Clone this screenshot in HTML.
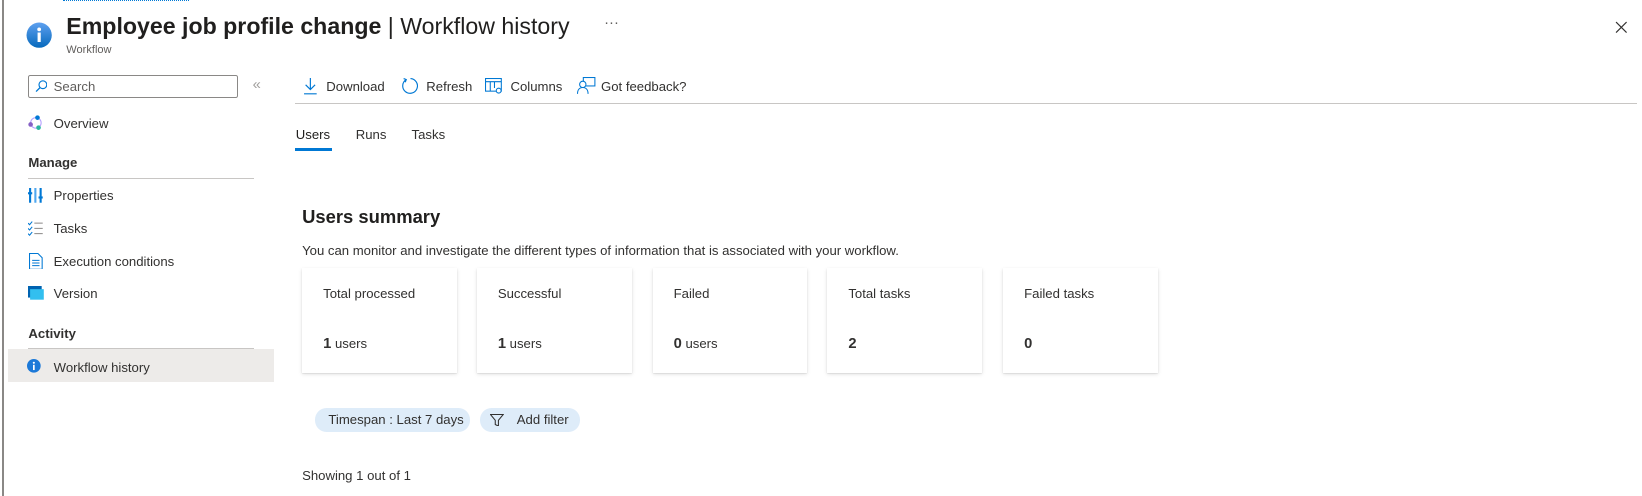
<!DOCTYPE html>
<html><head><meta charset="utf-8"><style>
html,body{margin:0;padding:0;background:#fff;overflow:hidden}
body{width:1642px;height:496px}
#w{position:relative;width:1560px;height:471px;zoom:1.05256;font-family:"Liberation Sans",sans-serif;color:#323130;font-size:12.5px}
.a{position:absolute;white-space:nowrap}
.nav{position:absolute;left:51px;font-size:12.5px}
.ic{position:absolute}
.card{position:absolute;top:255px;width:147px;height:99px;background:#fff;box-shadow:0 1.6px 3.6px rgba(0,0,0,.13),0 0.3px 0.9px rgba(0,0,0,.11)}
.card .l{position:absolute;left:20px;top:17px;font-size:12.5px}
.card .v{position:absolute;left:20px;top:64px;font-size:12.5px}
.card .v b{font-size:14px}
.pill{position:absolute;top:388px;height:22px;background:#deecf9;border-radius:11px;font-size:12.5px;line-height:22px}
</style></head><body><div id="w">
<div class="a" style="left:2px;top:0;width:2px;height:471px;background:#8a8886"></div>
<div class="a" style="left:60px;top:0;width:120px;height:2px;border-top:1px dotted #0078d4"></div>
<svg class="ic" style="left:25px;top:21px" width="25" height="25" viewBox="0 0 25 25"><defs><linearGradient id="g" x1="0" y1="0" x2="0" y2="1"><stop offset="0" stop-color="#5ea0ef"/><stop offset="1" stop-color="#0669bc"/></linearGradient></defs><circle cx="12.5" cy="12.5" r="12" fill="url(#g)"/><circle cx="12.5" cy="7" r="1.8" fill="#fff"/><rect x="11" y="10" width="3" height="9" fill="#fff"/></svg>
<div class="a" style="left:63px;top:12px;font-size:22px;color:#201f1e"><span style="font-weight:bold">Employee job profile change</span> | Workflow history</div>
<div class="a" style="left:574px;top:14px;font-size:14px;color:#605e5c">···</div>
<div class="a" style="left:63px;top:42px;font-size:10.5px;color:#605e5c">Workflow</div>
<svg class="ic" style="left:1534px;top:20px" width="12" height="12"><path d="M1 1L11 11M11 1L1 11" stroke="#323130" stroke-width="1.1"/></svg>

<div class="a" style="left:27px;top:71px;width:197px;height:20px;border:1px solid #8a8886;border-radius:2px"></div>
<svg class="ic" style="left:33px;top:76px" width="12" height="12"><circle cx="7.5" cy="4.5" r="3.7" fill="none" stroke="#0078d4" stroke-width="1.1"/><path d="M5 7L1 11" stroke="#0078d4" stroke-width="1.2"/></svg>
<div class="a" style="left:51px;top:75px;color:#605e5c">Search</div>
<div class="a" style="left:240px;top:73px;color:#a19f9d;font-size:14px">«</div>

<svg class="ic" style="left:27px;top:109px" width="15" height="15"><circle cx="7.5" cy="7.5" r="5" fill="none" stroke="#b4a0ff" stroke-width="1"/><circle cx="9" cy="2.5" r="2.2" fill="#0078d4"/><circle cx="2.5" cy="9" r="2.2" fill="#8661c5"/><circle cx="10" cy="12" r="2.2" fill="#29b6a0"/></svg>
<div class="nav" style="top:110px">Overview</div>
<div class="a" style="left:27px;top:147px;font-weight:bold;font-size:12.5px">Manage</div>
<div class="a" style="left:27px;top:169px;width:214px;height:1px;background:#c8c6c4"></div>
<svg class="ic" style="left:27px;top:179px" width="14" height="14"><rect x="1" y="0" width="2" height="14" fill="#0078d4"/><rect x="6" y="0" width="2" height="14" fill="#50a8f0"/><rect x="11" y="0" width="2" height="14" fill="#0078d4"/><rect x="0" y="4" width="4" height="2" fill="#0078d4"/><rect x="10" y="8" width="4" height="2" fill="#0078d4"/></svg>
<div class="nav" style="top:179px">Properties</div>
<svg class="ic" style="left:27px;top:210px" width="14" height="14"><path d="M0 2l1.5 1.5L4 0.5M0 7l1.5 1.5L4 5.5M0 12l1.5 1.5L4 10.5" fill="none" stroke="#0078d4" stroke-width="1"/><path d="M6 2h8M6 7h8M6 12h8" stroke="#8a8886" stroke-width="1"/></svg>
<div class="nav" style="top:210px">Tasks</div>
<svg class="ic" style="left:28px;top:240px" width="13" height="16"><path d="M0.5 0.5h8l4 4v11h-12z" fill="#fff" stroke="#0078d4"/><path d="M3 7h7M3 9.5h7M3 12h7" stroke="#0078d4"/></svg>
<div class="nav" style="top:241px">Execution conditions</div>
<svg class="ic" style="left:27px;top:272px" width="15" height="13"><rect x="0" y="0" width="13" height="11" fill="#0063b1"/><rect x="2" y="3" width="13" height="10" fill="#32bfef"/></svg>
<div class="nav" style="top:272px">Version</div>
<div class="a" style="left:27px;top:310px;font-weight:bold;font-size:12.5px">Activity</div>
<div class="a" style="left:27px;top:331px;width:214px;height:1px;background:#c8c6c4"></div>
<div class="a" style="left:8px;top:332px;width:252px;height:31px;background:#edebe9"></div>
<svg class="ic" style="left:26px;top:341px" width="13" height="13"><circle cx="6.5" cy="6.5" r="6.5" fill="#1c79d8"/><circle cx="6.5" cy="3.6" r="1" fill="#fff"/><rect x="5.7" y="5.5" width="1.6" height="5" fill="#fff"/></svg>
<div class="nav" style="top:342px">Workflow history</div>

<svg class="ic" style="left:288px;top:74px" width="14" height="16"><path d="M7 0v11M2.5 6.5L7 11l4.5-4.5M1 15h12" fill="none" stroke="#0078d4" stroke-width="1.1"/></svg>
<div class="a" style="left:310px;top:75px">Download</div>
<svg class="ic" style="left:381px;top:73px" width="17" height="17"><path d="M5 2.5A7 7 0 1 0 9 1.5" fill="none" stroke="#0078d4" stroke-width="1.1"/><path d="M2.5 1.5L5 2.5 4 5" fill="none" stroke="#0078d4" stroke-width="1.1"/></svg>
<div class="a" style="left:405px;top:75px">Refresh</div>
<svg class="ic" style="left:461px;top:74px" width="17" height="15"><rect x="0.5" y="0.5" width="15" height="12" fill="none" stroke="#0078d4"/><path d="M0.5 3.5h15M5 3.5v9M9 3.5v6" stroke="#0078d4"/><circle cx="13" cy="12" r="2.3" fill="#fff" stroke="#0078d4"/></svg>
<div class="a" style="left:485px;top:75px">Columns</div>
<svg class="ic" style="left:548px;top:73px" width="18" height="17"><rect x="6" y="0.5" width="11" height="8" fill="none" stroke="#0078d4"/><circle cx="5.5" cy="7" r="3" fill="#fff" stroke="#0078d4"/><path d="M0.5 16c0-4 2-6 5-6s5 2 5 6" fill="#fff" stroke="#0078d4"/></svg>
<div class="a" style="left:571px;top:75px">Got feedback?</div>
<div class="a" style="left:280px;top:98px;width:1275px;height:1px;background:#c8c6c4"></div>

<div class="a" style="left:281px;top:121px;color:#201f1e">Users</div>
<div class="a" style="left:338px;top:121px">Runs</div>
<div class="a" style="left:391px;top:121px">Tasks</div>
<div class="a" style="left:280px;top:141px;width:35px;height:2px;background:#0078d4"></div>

<div class="a" style="left:287px;top:196px;font-size:17.5px;font-weight:bold;color:#201f1e">Users summary</div>
<div class="a" style="left:287px;top:231px">You can monitor and investigate the different types of information that is associated with your workflow.</div>

<div class="card" style="left:287px"><div class="l">Total processed</div><div class="v"><b>1</b> users</div></div>
<div class="card" style="left:453px"><div class="l">Successful</div><div class="v"><b>1</b> users</div></div>
<div class="card" style="left:620px"><div class="l">Failed</div><div class="v"><b>0</b> users</div></div>
<div class="card" style="left:786px"><div class="l">Total tasks</div><div class="v"><b>2</b></div></div>
<div class="card" style="left:953px"><div class="l">Failed tasks</div><div class="v"><b>0</b></div></div>

<div class="pill" style="left:299px;width:148px"><span style="margin-left:13px">Timespan : Last 7 days</span></div>
<div class="pill" style="left:456px;width:95px"><svg style="position:absolute;left:10px;top:5px" width="13" height="12"><path d="M0.5 0.5h12L8 6v5.5L5 10V6z" fill="none" stroke="#323130"/></svg><span style="margin-left:35px">Add filter</span></div>

<div class="a" style="left:287px;top:445px">Showing 1 out of 1</div>
</div></body></html>
